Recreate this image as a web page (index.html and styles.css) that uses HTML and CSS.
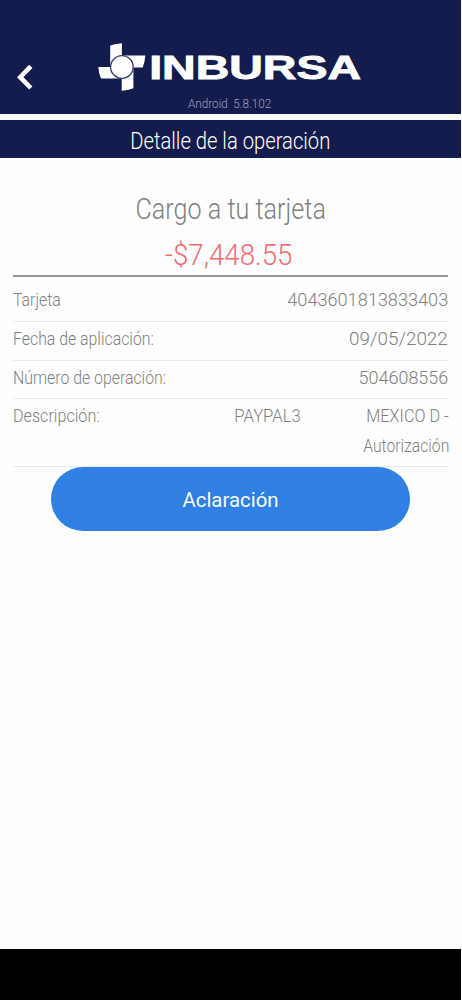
FILE: index.html
```
<!DOCTYPE html>
<html lang="es">
<head>
<meta charset="utf-8">
<title>Detalle de la operación</title>
<link rel="stylesheet" href="styles.css">
</head>
<body>
<div class="screen">
  <header class="header">
    <svg class="back" viewBox="0 0 20 28" aria-label="Regresar"><path d="M17.8 3.4 7.2 14.2 17.8 25"/></svg>
    <div class="brand">
      <svg class="logo" viewBox="97 42 266 50">
        <path class="arm" d="M110.2 67V45.6Q116 43.6 121.9 43.3V55.4H145.3Q145 61.5 142.7 67.4H133.4V88.3Q127.8 90.6 121.7 90.8V78.5H101Q98.6 73 98.3 67Z"/>
        <circle class="disc" cx="121.9" cy="67" r="11.3"/>
        <text class="wordmark" transform="translate(149.2 78.5) scale(1.4 1)" textLength="151.3" lengthAdjust="spacingAndGlyphs">INBURSA</text>
      </svg>
      <div class="version"><span>Android</span><span>5.8.102</span></div>
    </div>
  </header>
  <h1 class="title"><span class="title-text">Detalle de la operación</span></h1>
  <main class="content">
    <section class="summary">
      <div class="concept"><span class="concept-text">Cargo a tu tarjeta</span></div>
      <div class="amount"><span class="amount-text">-$7,448.55</span></div>
    </section>
    <dl class="details">
      <div class="row"><dt>Tarjeta</dt><dd class="card-number">4043601813833403</dd></div>
      <div class="row"><dt>Fecha de aplicación:</dt><dd class="date">09/05/2022</dd></div>
      <div class="row"><dt>Número de operación:</dt><dd class="operation">504608556</dd></div>
      <div class="row description"><dt class="wide-label">Descripción:</dt><dd class="merchant">PAYPAL3</dd><dd class="place"><span class="country">MEXICO D -</span><span class="status">Autorización</span></dd></div>
    </dl>
    <button class="clarify" type="button">Aclaración</button>
  </main>
  <footer class="navbar"></footer>
</div>
</body>
</html>
```
FILE: styles.css
```
* { box-sizing: border-box; }

body {
  margin: 0;
  background: #fefefe;
  color: #808080;
  font-family: Roboto, "Liberation Sans", sans-serif;
  font-weight: 300;
}

.screen {
  display: flex;
  flex-direction: column;
  width: 461px;
  height: 1000px;
}

.header {
  display: flex;
  height: 114px;
  padding: 42px 0 0 13px;
  background: #141b4d;
}

.back {
  width: 20px;
  height: 28px;
  margin-top: 21px;
  fill: none;
  stroke: #fff;
  stroke-width: 4.6;
}

.brand {
  display: flex;
  flex-direction: column;
  width: 266px;
  margin-left: 64px;
}

.logo { width: 266px; height: 50px; }
.arm { fill: #fff; }
.disc { fill: #fff; stroke: #343b67; stroke-width: 1.3; }

.wordmark {
  fill: #fff;
  stroke: #fff;
  stroke-width: .9;
  font: bold 33.6px "Liberation Sans", sans-serif;
}

.version {
  display: flex;
  gap: 6px;
  width: 93px;
  margin: 4px 0 0 91px;
  color: #a0a3bc;
  font-size: 13px;
  line-height: 16px;
  transform: scaleX(.9);
  transform-origin: left;
}

.title {
  display: flex;
  justify-content: center;
  height: 38px;
  margin: 6px 0 0;
  background: #141b4d;
  color: #fff;
  font-size: 23.5px;
  font-weight: 300;
  line-height: 42px;
}

.title-text { transform: scaleX(.86); white-space: nowrap; }

.content {
  display: flex;
  flex: 1;
  flex-direction: column;
  padding: 32px 13px 0;
}

.summary {
  height: 87px;
  border-bottom: 2px solid #999;
  text-align: center;
  font-size: 29px;
}

.concept { line-height: 38px; }
.concept-text { display: inline-block; transform: scaleX(.868); }
.amount { color: #ee6c72; line-height: 54px; }
.amount-text { display: inline-block; margin-right: 3px; transform: scaleX(.955); }

.details {
  margin: 0;
  font-size: 18.5px;
  line-height: 30px;
}

.row {
  display: flex;
  justify-content: space-between;
  height: 38.5px;
  padding-top: 2px;
  border-bottom: 1px solid #eaeaea;
}

.row:first-child { height: 45px; padding-top: 8px; }

dt { transform: scaleX(.857); transform-origin: left; white-space: nowrap; }
dd { margin: 0; transform-origin: right; white-space: nowrap; }
.wide-label { transform: scaleX(.872); }
.card-number { transform: scaleX(.98); }
.date { transform: scaleX(1.02); }
.operation { transform: scaleX(.974); }

.row.description { height: 68px; }
.merchant { margin-left: 67px; transform: scaleX(.9); }
.place { display: flex; flex-direction: column; align-items: flex-end; margin-right: -1px; }
.country, .status { transform-origin: right; }
.country { transform: scaleX(.88); }
.status { transform: scaleX(.85); }

.clarify {
  width: 359px;
  height: 64px;
  margin-left: 38px;
  padding: 2px 0 0;
  border: 0;
  border-radius: 32px;
  background: #2f80e2;
  color: #f8fbff;
  font: 400 20.4px Roboto, sans-serif;
}

.navbar { width: 461px; height: 51.5px; background: #000; }
```
